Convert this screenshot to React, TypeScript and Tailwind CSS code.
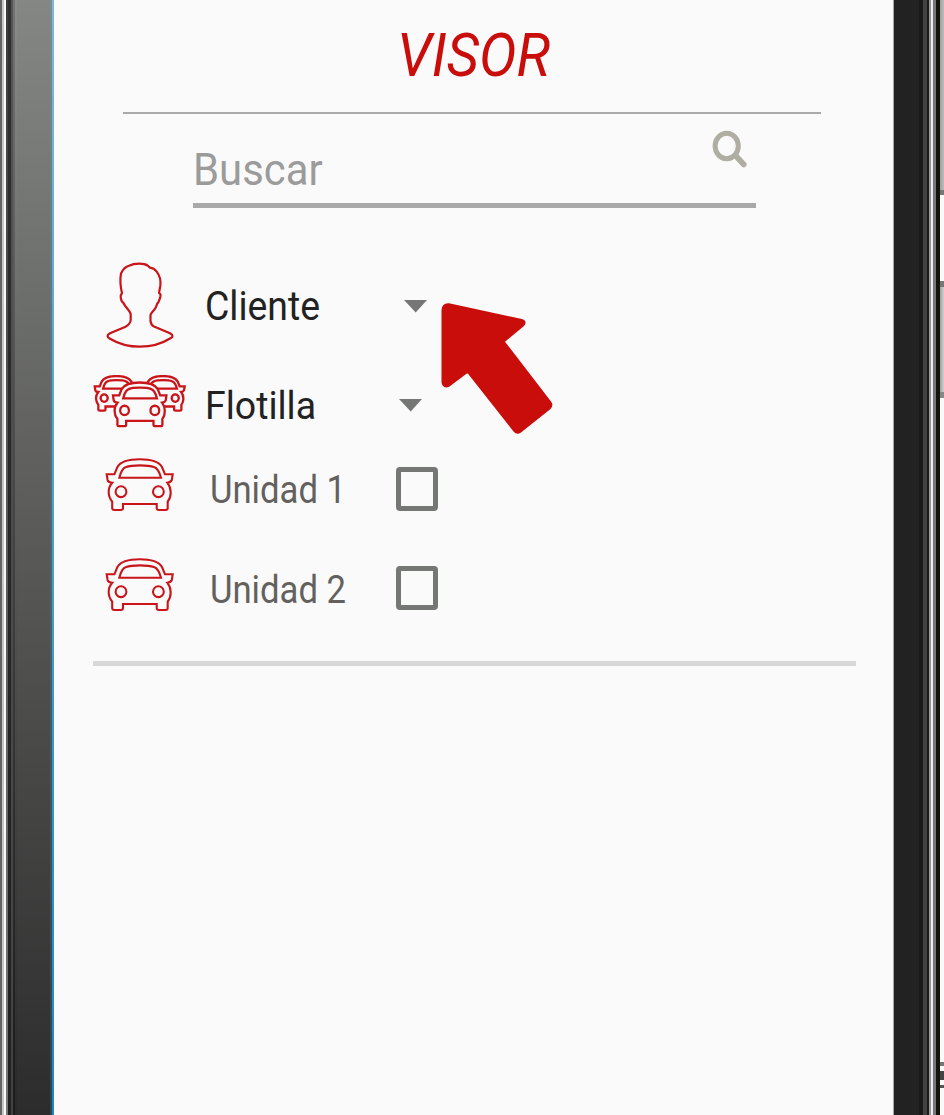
import React from "react";

const BODY =
  "M34.7 1.3C47 1.3 54 4 57 9L60 16.3H67.7L66.8 22C66 24 64 24.5 62.3 24.7C66.5 30 67 38 62.7 43.7V50Q62.7 52 60.5 52H54Q51.7 52 51.7 50V46H18V50Q18 52 15.7 52H9.5Q7.2 52 7.2 50V43.7C2.5 38 2.5 30 7.2 24.7C5 24.5 3 24 2.6 22L1.7 16.3H9.4L12.4 9C15.4 4 22.4 1.3 34.7 1.3Z";

function CarShape({ fill = "none" }: { fill?: string }) {
  return (
    <>
      <path d={BODY} fill={fill} vectorEffect="non-scaling-stroke" />
      <path
        d="M14.3 19.8C16 13 18 10 21 9C27 6.8 43 6.8 49 9C52 10 54.500 14 56 19.800Z"
        fill="none"
        vectorEffect="non-scaling-stroke"
      />
      <circle cx="16" cy="33.7" r="5.4" fill="none" vectorEffect="non-scaling-stroke" />
      <circle cx="53.4" cy="33.7" r="5.4" fill="none" vectorEffect="non-scaling-stroke" />
    </>
  );
}

function CarIcon() {
  return (
    <svg width="70" height="55" viewBox="0 0 70 55" stroke="#c9151a" strokeWidth="2.1">
      <CarShape />
    </svg>
  );
}

function FleetIcon() {
  return (
    <svg width="94" height="54" viewBox="0 0 94 54" stroke="#c9151a" strokeWidth="2.3">
      <g transform="translate(0.6 0.2) scale(.66 .68)">
        <CarShape fill="#fafafa" />
      </g>
      <g transform="translate(47 0.2) scale(.66 .68)">
        <CarShape fill="#fafafa" />
      </g>
      <g transform="translate(18.6 6.4) scale(.81 .86)">
        <CarShape fill="#fafafa" />
      </g>
    </svg>
  );
}

function PersonIcon() {
  return (
    <svg width="70" height="88" viewBox="0 0 70 88" fill="none" stroke="#c9151a" strokeWidth="2.2">
      <path
        strokeLinejoin="round"
        d="M34.3 1.700C38 1.700 41 2.500 42.500 3.500L45 5.700C48 6 50 7.500 51.7 9.700C55 14 56 19 55.300 24L54 31Q56.500 32 55 36L53.500 40Q52 41 51 45C49 49 46 50.500 45.500 53V59Q46 63 49 64.500L65 71.200Q70 74 65 76.500C57 81.500 46 84.700 35 84.700C24 84.700 13 81.500 5 76.700Q0 74 5 71.300L20 65Q25.500 62 25.700 58V52C24.500 48 20 45 18.500 41Q15.500 39 15.700 33.500L17 31C15.500 25 15 17 16 11.500C18 7 21 4.500 24 3.700Q28 1.700 34.300 1.700Z"
      />
    </svg>
  );
}

function Caret() {
  return (
    <svg width="23" height="13" viewBox="0 0 23 13">
      <path d="M0 0H23L11.700 12.500Z" fill="#757775" />
    </svg>
  );
}

function Checkbox() {
  return <div className="h-11 w-[42px] rounded-[4px] border-[5px] border-[#757775]" />;
}

function LeftBezel() {
  return (
    <div className="flex w-[54px] shrink-0">
      <div className="w-0.5 bg-[#646464]" />
      <div className="w-0.5 bg-[#c6c6c6]" />
      <div className="w-0.5 bg-[#f8f8f8]" />
      <div className="w-0.5 bg-linear-to-b from-[#3c3c3c] to-[#777777]" />
      <div className="w-[3px] bg-linear-to-b from-[#303030] to-[#202020]" />
      <div className="w-0.5 bg-linear-to-b from-[#555555] to-[#424242]" />
      <div className="w-0.5 bg-linear-to-b from-[#747474] via-[#424242] to-[#1b1b1b]" />
      <div className="w-0.5 bg-linear-to-b from-[#8a8a8a] via-[#575757] to-[#292929]" />
      <div className="w-[33px] bg-linear-to-b from-[#858785] via-[#585957] to-[#2c2c2c]" />
      <div className="w-0.5 bg-linear-to-b from-[#7d8b98] via-[#4c6373] to-[#2b4450]" />
      <div className="w-0.5 bg-linear-to-b from-[#7abad8] via-[#469fc7] to-[#2186bd]" />
    </div>
  );
}

function RightBezel() {
  return (
    <div className="flex w-[51px] shrink-0">
      <div className="w-px bg-[#a5a5a5]" />
      <div className="w-[25px] bg-[#222222]" />
      <div className="w-1 bg-[#1a1a1a]" />
      <div className="w-1 bg-[#434242]" />
      <div className="w-0.5 bg-[#1b1b1b]" />
      <div className="w-0.5 bg-[#969696]" />
      <div className="w-0.5 bg-[#ededed]" />
      <div className="w-[3px] bg-[#777777]" />
      <div className="w-1 bg-[#14140f]" />
      <div className="flex w-1 flex-col bg-[#fafafa]">
        <div className="h-[190px] bg-linear-to-r from-[#a0a0a0] to-[#bcbcbc]" />
        <div className="h-[5px] bg-[#777777]" />
        <div className="h-[86px]" />
        <div className="h-1.5 bg-[#777777]" />
        <div className="h-[105px] bg-linear-to-r from-[#a0a0a0] to-[#d0d0d0]" />
        <div className="h-1.5 bg-[#888888]" />
        <div className="h-[664px]" />
        <div className="h-1 bg-[#777777]" />
        <div className="h-[5px]" />
        <div className="h-[9px] bg-[#444444]" />
        <div className="h-[5px]" />
        <div className="h-[3px] bg-[#555555]" />
      </div>
    </div>
  );
}

type RowProps = { icon: React.ReactNode; label: React.ReactNode; control: React.ReactNode; height: string };

function Row({ icon, label, control, height }: RowProps) {
  return (
    <div className={"grid grid-cols-[109px_194px_1fr] items-start " + height}>
      {icon}
      {label}
      {control}
    </div>
  );
}

export default function App() {
  return (
    <div className="relative flex h-[1115px] w-[944px] overflow-hidden bg-[#fafafa] font-['Roboto',sans-serif]">
      <LeftBezel />
      <main className="flex min-w-0 flex-1 flex-col">
        <header className="mr-[72px] ml-[69px] h-[114px] border-b-2 border-[#aaaaaa] pl-[274px]">
          <h1 className="w-fit origin-left scale-x-[.938] pt-[25px] text-[60px] leading-[62px] text-[#c90d0a] italic">
            VISOR
          </h1>
        </header>
        <div className="mr-[137px] ml-[139px] flex h-[94px] justify-between border-b-[5px] border-[#a9a9a9]">
          <span className="w-fit origin-left scale-x-[.93] pt-[29px] text-[45px] leading-[53px] text-[#9b9b9b]">
            Buscar
          </span>
          <svg className="mt-4 mr-2" width="36" height="40" viewBox="0 0 36 40" fill="none" stroke="#b0aea3">
            <ellipse cx="14.700" cy="16" rx="11.600" ry="12.800" strokeWidth="5" />
            <path d="M24 26L31.800 34.500" strokeWidth="5.600" strokeLinecap="round" />
          </svg>
        </div>
        <section className="mr-[37px] ml-[39px] flex h-[458px] flex-col border-b-[5px] border-[#d8d8d8] pt-12">
          <Row
            height="h-[100px]"
            icon={<div className="pt-1.5 pl-3"><PersonIcon /></div>}
            label={
              <span className="mt-[27px] ml-[2.5px] w-fit origin-left scale-x-[.935] text-[40px] leading-[48px] text-[#222222]">
                Cliente
              </span>
            }
            control={<div className="pt-11 pl-2"><Caret /></div>}
          />
          <Row
            height="h-[92px]"
            icon={<div className="pt-[19px]"><FleetIcon /></div>}
            label={
              <span className="mt-[26px] ml-[2.5px] w-fit origin-left scale-x-[.96] text-[39px] leading-[48px] text-[#222222]">
                Flotilla
              </span>
            }
            control={<div className="pt-[43px] pl-[3px]"><Caret /></div>}
          />
          <Row
            height="h-[100px]"
            icon={<div className="pt-2.5 pl-3"><CarIcon /></div>}
            label={
              <span className="mt-[18px] ml-[7.5px] w-fit origin-left scale-x-[.9] text-[38.500px] leading-[48px] text-[#63615e]">
                Unidad 1
              </span>
            }
            control={<div className="pt-[19px]"><Checkbox /></div>}
          />
          <Row
            height="h-[100px]"
            icon={<div className="pt-2.5 pl-3"><CarIcon /></div>}
            label={
              <span className="mt-[18px] ml-[7.5px] w-fit origin-left scale-x-[.9] text-[38.500px] leading-[48px] text-[#63615e]">
                Unidad 2
              </span>
            }
            control={<div className="pt-[18px]"><Checkbox /></div>}
          />
        </section>
      </main>
      <RightBezel />
      <svg className="absolute top-[302px] left-[440px]" width="114" height="134" viewBox="0 0 114 134">
        <path
          fill="#c90d0a"
          d="M9 1.300L82 17Q88 19 84 24L65 39.700L111 99.500Q114 103 110.500 107L81 130.500Q77 133.500 73.500 129.500L29 73Q27.500 70.500 25.500 72.500L9.500 84.500C5 87 1.700 84 1.500 80V8Q2 .8 9 1.300Z"
        />
      </svg>
    </div>
  );
}
